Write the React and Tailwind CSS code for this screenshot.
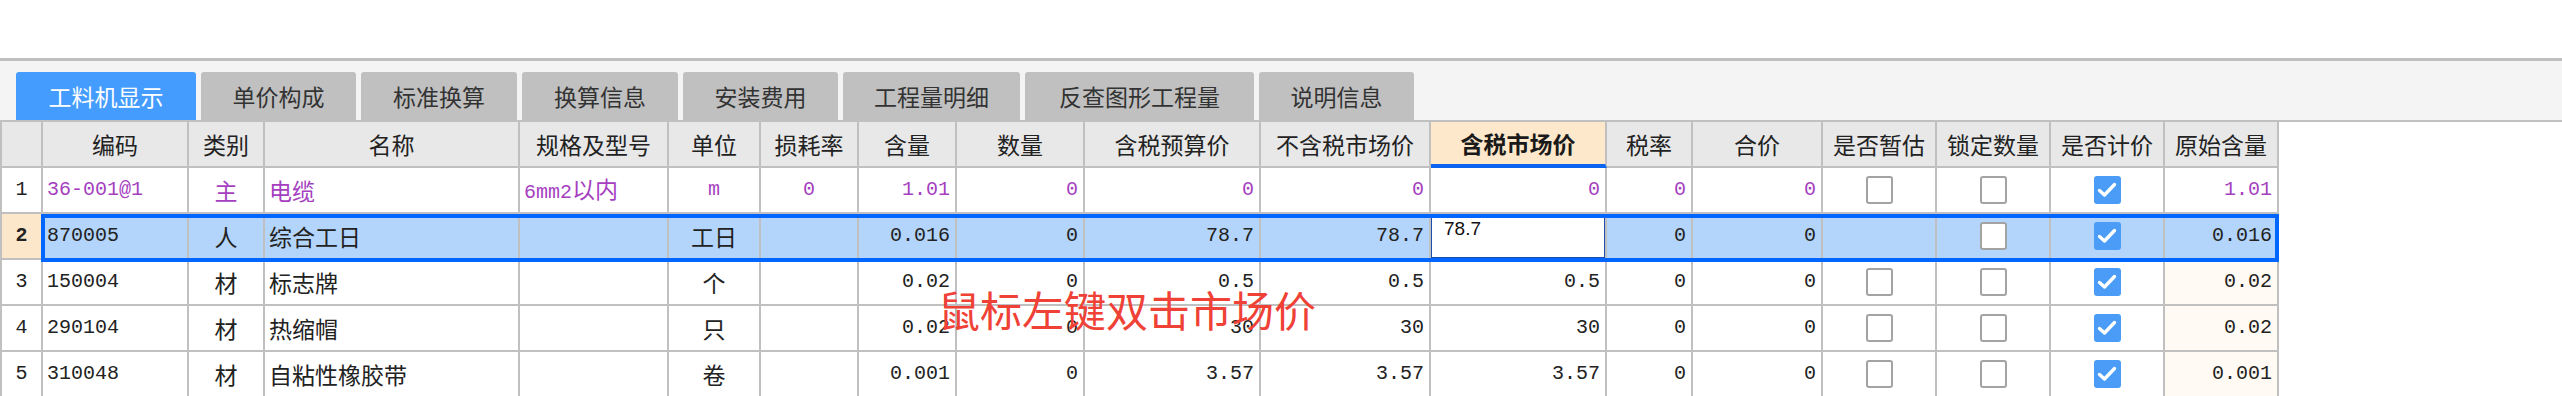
import React from 'react';

const M = "font-['Liberation_Mono',monospace] text-[20px]";
const C = "font-['Noto_Sans_CJK_SC',sans-serif] text-[23px]";

const HEADERS = ['', '编码', '类别', '名称', '规格及型号', '单位', '损耗率', '含量', '数量', '含税预算价', '不含税市场价', '含税市场价', '税率', '合价', '是否暂估', '锁定数量', '是否计价', '原始含量'];

// alignment per column
const ALIGN = ['c', 'l', 'c', 'l', 'l', 'c', 'c', 'r', 'r', 'r', 'r', 'r', 'r', 'r', 'c', 'c', 'c', 'r'];

const TABS = [
    { label: '工料机显示', w: 'w-[180px]', active: true },
    { label: '单价构成', w: 'w-[155px]' },
    { label: '标准换算', w: 'w-[156px]' },
    { label: '换算信息', w: 'w-[156px]' },
    { label: '安装费用', w: 'w-[155px]' },
    { label: '工程量明细', w: 'w-[177px]' },
    { label: '反查图形工程量', w: 'w-[229px]' },
    { label: '说明信息', w: 'w-[155px]' },
];

const ROWS = [
    { purple: true, cells: ['1', '36-001@1', '主', '电缆', '6mm2以内', 'm', '0', '1.01', '0', '0', '0', '0', '0', '0', 'off', 'off', 'on', '1.01'] },
    { selected: true, cells: ['2', '870005', '人', '综合工日', '', '工日', '', '0.016', '0', '78.7', '78.7', 'EDIT', '0', '0', '', 'off', 'on', '0.016'] },
    { cells: ['3', '150004', '材', '标志牌', '', '个', '', '0.02', '0', '0.5', '0.5', '0.5', '0', '0', 'off', 'off', 'on', '0.02'] },
    { cells: ['4', '290104', '材', '热缩帽', '', '只', '', '0.02', '0', '30', '30', '30', '0', '0', 'off', 'off', 'on', '0.02'] },
    { cells: ['5', '310048', '材', '自粘性橡胶带', '', '卷', '', '0.001', '0', '3.57', '3.57', '3.57', '0', '0', 'off', 'off', 'on', '0.001'] },
];

function Runs({ text }) {
    // split mixed text into CJK / latin runs so each gets its own font
    const parts = text.split(/([\u4e00-\u9fff]+)/).filter(Boolean);
    return (
        <span className="inline-flex items-baseline">
            {parts.map((p, i) => (
                <span key={i} className={/[\u4e00-\u9fff]/.test(p) ? C : M}>{p}</span>
            ))}
        </span>
    );
}

function Check({ on }) {
    if (on) {
        return (
            <span className="w-[27px] h-[28px] rounded-[3px] bg-[#4a9cf6] flex items-center justify-center">
                <svg width="20" height="16" viewBox="0 0 20 16">
                    <path d="M2.5 8.5 L7.5 13 L17.5 2.5" stroke="white" strokeWidth="3.4" fill="none" strokeLinecap="round" strokeLinejoin="round" />
                </svg>
            </span>
        );
    }
    return <span className="w-[27px] h-[28px] rounded-[3px] border-2 border-[#a3a3a3] bg-white" />;
}

function Cell({ value, col, row, ri }) {
    const align = ALIGN[col];
    let cls = 'h-[46px] border-r-2 border-b-2 border-[#c0c0c0] flex items-center leading-none overflow-hidden whitespace-nowrap';
    if (col === 0) cls += ' border-l-2';
    if (align === 'l') cls += ' justify-start pl-[4px]';
    if (align === 'c') cls += ' justify-center';
    if (align === 'r') cls += ' justify-end pr-[5px]';

    let bg = 'bg-white';
    if (row.selected) bg = col === 0 ? 'bg-[#fde7ca]' : 'bg-[#b4d5fb]';
    else if (col === 17 && ri > 1) bg = 'bg-[#fffaf3]';
    cls += ' ' + bg;
    cls += row.purple && col !== 0 ? ' text-[#a53fbf]' : ' text-[#222]';

    if (value === 'EDIT') {
        return (
            <div className="h-[46px] border-b-2 border-r-2 border-[#c0c0c0] bg-[#b4d5fb] flex">
                <div className="flex-1 bg-white border border-[#1a4fb0] pl-[12px] pt-[4px] font-['Liberation_Sans',sans-serif] text-[19px] text-[#111] leading-none">78.7</div>
            </div>
        );
    }
    if (value === 'on' || value === 'off') {
        return <div className={cls}><Check on={value === 'on'} /></div>;
    }
    if (col === 0) {
        return <div className={cls}><span className={M + (row.selected ? ' font-bold' : '')}>{value}</span></div>;
    }
    return <div className={cls}><Runs text={value} /></div>;
}

export default function App() {
    return (
        <div className="w-[2562px] h-[396px] overflow-hidden bg-white relative">
            <div className="h-[58px]" />
            <div className="h-[3px] bg-[#c0c0c0]" />

            {/* tab strip */}
            <div className="h-[61px] bg-[#f4f4f4] border-b-2 border-[#c0c0c0] flex items-end pl-[16px] gap-[5px]">
                {TABS.map(t => (
                    <div
                        key={t.label}
                        className={`${t.w} h-[48px] rounded-t-[3px] flex items-center justify-center ${C} ${t.active ? 'bg-[#449cff] text-white' : 'bg-[#c0c0c0] text-[#333]'}`}
                    >
                        {t.label}
                    </div>
                ))}
            </div>

            {/* material grid */}
            <div className="relative w-[2279px] grid grid-cols-[43px_146px_76px_255px_149px_92px_98px_98px_128px_176px_170px_176px_86px_130px_114px_114px_114px_114px]">
                {HEADERS.map((h, i) => (
                    <div
                        key={i}
                        className={`h-[46px] border-r-2 border-[#c0c0c0] flex items-center justify-center leading-none ${C} ${i === 0 ? 'border-l-2' : ''} ${i === 11 ? 'bg-[#fee8cb] font-bold text-[#1a1a1a] border-b-4 border-b-[#0a64f0]' : 'bg-[#e8e8e8] text-[#222] border-b-2'}`}
                    >
                        {h}
                    </div>
                ))}
                {ROWS.map((row, ri) =>
                    row.cells.map((v, ci) => (
                        <Cell key={ri + '-' + ci} value={v} col={ci} row={row} ri={ri} />
                    ))
                )}

                {/* selected row frame */}
                <div className="absolute left-[41px] top-[92px] w-[2238px] h-[48px] border-4 border-[#0066ff] pointer-events-none" />
            </div>

            {/* hint */}
            <div className="absolute left-[938px] top-[288px] font-['Noto_Sans_CJK_SC',sans-serif] text-[42px] leading-none text-[#ef4136] whitespace-nowrap">
                鼠标左键双击市场价
            </div>
        </div>
    );
}
